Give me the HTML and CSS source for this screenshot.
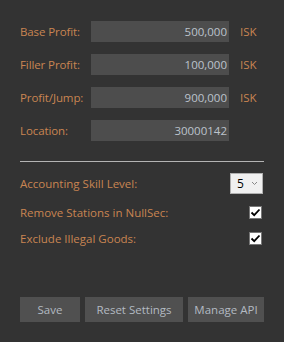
FILE: index.html
```html
<!DOCTYPE html>
<html>
<head>
    <title>Settings</title>
    <link rel="stylesheet" href="styles.css">
</head>
<body>
    <div class="panel">
        <div class="fields">
            <label class="field-label">Base Profit:</label>
            <div class="field-input">500,000</div>
            <span class="unit">ISK</span>

            <label class="field-label">Filler Profit:</label>
            <div class="field-input">100,000</div>
            <span class="unit">ISK</span>

            <label class="field-label">Profit/Jump:</label>
            <div class="field-input">900,000</div>
            <span class="unit">ISK</span>

            <label class="field-label">Location:</label>
            <div class="field-input">30000142</div>
            <span class="unit"></span>
        </div>

        <hr class="divider">

        <div class="option-row skill-row">
            <span class="option-label">Accounting Skill Level:</span>
            <div class="select-box">
                <span class="select-value">5</span>
                <svg class="select-arrow" width="7" height="5" viewBox="0 0 7 5">
                    <path d="M1 1 L3.5 3.5 L6 1" fill="none" stroke="#888" stroke-width="1"/>
                </svg>
            </div>
        </div>
        <div class="option-row">
            <span class="option-label">Remove Stations in NullSec:</span>
            <span class="check-box">
                <svg width="11" height="11" viewBox="0 0 11 11">
                    <path d="M1.5 5.5 L4.2 8.2 L9.5 2.5" fill="none" stroke="#000" stroke-width="1.8"/>
                </svg>
            </span>
        </div>
        <div class="option-row">
            <span class="option-label">Exclude Illegal Goods:</span>
            <span class="check-box">
                <svg width="11" height="11" viewBox="0 0 11 11">
                    <path d="M1.5 5.5 L4.2 8.2 L9.5 2.5" fill="none" stroke="#000" stroke-width="1.8"/>
                </svg>
            </span>
        </div>

        <div class="button-group">
            <button class="btn btn-save">Save</button>
            <button class="btn btn-reset">Reset Settings</button>
            <button class="btn btn-api">Manage API</button>
        </div>
    </div>
</body>
</html>
```

FILE: styles.css
```css
body {
    margin: 0;
    background-color: #333333;
    font-family: "Open Sans", "Noto Sans", sans-serif;
    font-size: 11.5px;
}
.panel {
    width: 284px;
    height: 342px;
    box-sizing: border-box;
    padding: 21px 20px 0 20px;
}
.fields {
    display: grid;
    grid-template-columns: 71px 138px auto;
    grid-auto-rows: 21px;
    row-gap: 12px;
    align-items: center;
}
.field-label {
    color: #c98552;
    letter-spacing: -0.1px;
}
.field-input {
    height: 21px;
    background-color: #4d4d4d;
    color: #bcc3cc;
    text-align: right;
    line-height: 21px;
    padding-right: 2px;
    box-sizing: border-box;
}
.unit {
    color: #c98552;
    padding-left: 11px;
}
.divider {
    border: none;
    border-top: 1px solid #b4b4b4;
    margin: 20px 0 10px 0;
    height: 0;
}
.option-row {
    display: flex;
    justify-content: space-between;
    align-items: center;
    height: 26px;
    padding-right: 2px;
}
.skill-row {
    height: 22px;
    padding-right: 1px;
    margin-bottom: 5px;
}
.option-label {
    color: #c98552;
}
.select-box {
    width: 33px;
    height: 21px;
    box-sizing: border-box;
    background-color: #f0f0f0;
    border: 1px solid #b0b0b0;
    display: flex;
    align-items: center;
    padding-left: 6px;
    gap: 7px;
}
.select-value {
    color: #000;
    font-size: 12px;
}
.check-box {
    width: 13px;
    height: 13px;
    box-sizing: border-box;
    background-color: #fff;
    border: 1px solid #777;
    display: flex;
    align-items: center;
    justify-content: center;
}
.button-group {
    display: flex;
    gap: 5px;
    margin-top: 46px;
}
.btn {
    height: 25px;
    background-color: #505050;
    color: #b3bac2;
    border: none;
    font-family: inherit;
    font-size: 11.5px;
    padding: 0;
}
.btn-save {
    width: 60px;
}
.btn-reset {
    width: 98px;
}
.btn-api {
    width: 76px;
}
```
